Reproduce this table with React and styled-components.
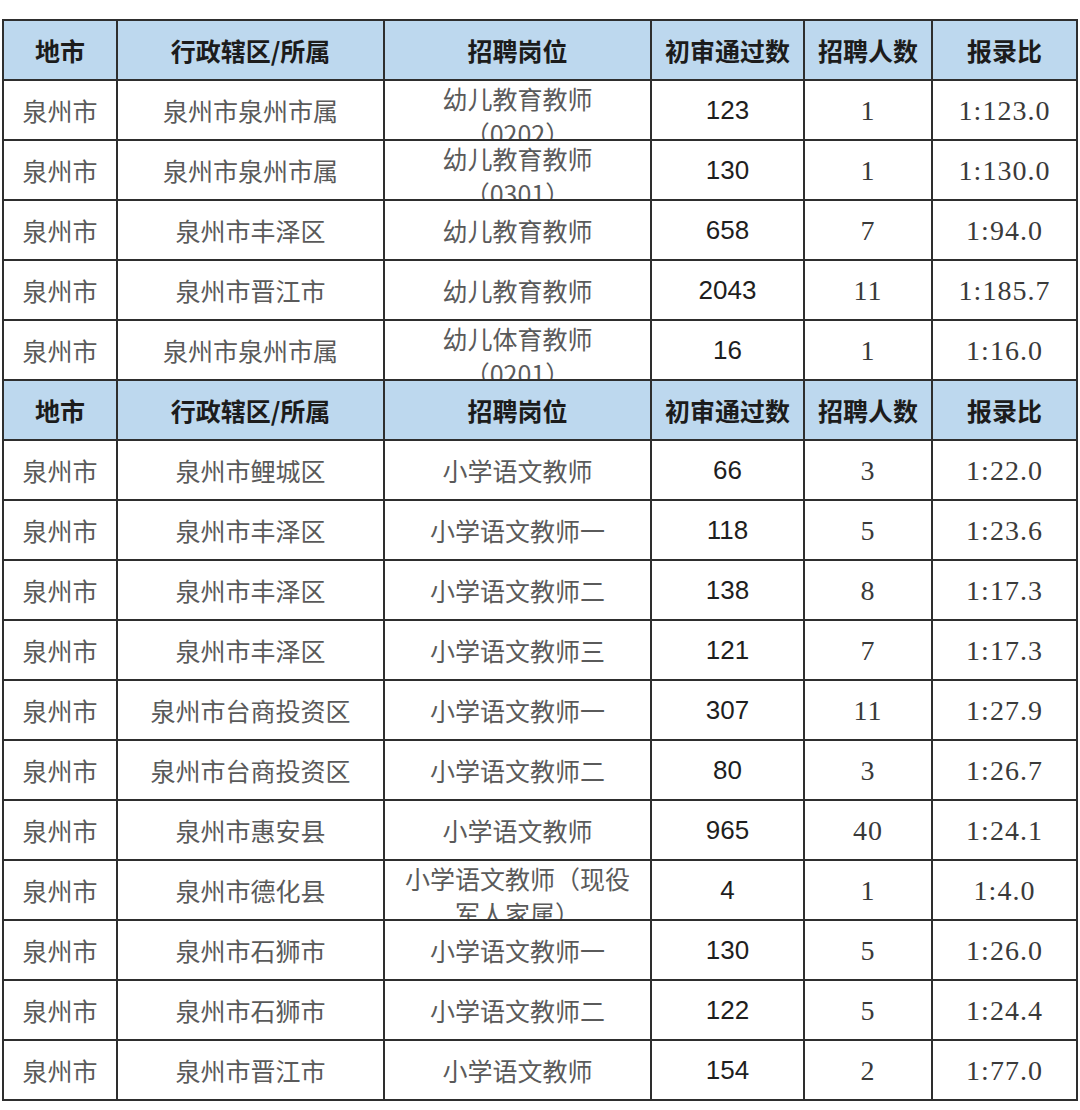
import styled, { createGlobalStyle } from "styled-components";

const GlobalStyle = createGlobalStyle`
	html, body {
		margin: 0;
		padding: 0;
		background: #ffffff;
	}
	body {
		padding: 19px 2px 0 2px;
		font-family: "Noto Sans CJK SC", "Noto Sans", sans-serif;
	}
`;

const HEAD = ["地市", "行政辖区/所属", "招聘岗位", "初审通过数", "招聘人数", "报录比"];

// first block: kindergarten posts
const GROUP_1 = [
	["泉州市", "泉州市泉州市属", "幼儿教育教师\n（0202）", "123", "1", "1:123.0"],
	["泉州市", "泉州市泉州市属", "幼儿教育教师\n（0301）", "130", "1", "1:130.0"],
	["泉州市", "泉州市丰泽区", "幼儿教育教师", "658", "7", "1:94.0"],
	["泉州市", "泉州市晋江市", "幼儿教育教师", "2043", "11", "1:185.7"],
	["泉州市", "泉州市泉州市属", "幼儿体育教师\n（0201）", "16", "1", "1:16.0"],
];

// second block: primary school chinese
const GROUP_2 = [
	["泉州市", "泉州市鲤城区", "小学语文教师", "66", "3", "1:22.0"],
	["泉州市", "泉州市丰泽区", "小学语文教师一", "118", "5", "1:23.6"],
	["泉州市", "泉州市丰泽区", "小学语文教师二", "138", "8", "1:17.3"],
	["泉州市", "泉州市丰泽区", "小学语文教师三", "121", "7", "1:17.3"],
	["泉州市", "泉州市台商投资区", "小学语文教师一", "307", "11", "1:27.9"],
	["泉州市", "泉州市台商投资区", "小学语文教师二", "80", "3", "1:26.7"],
	["泉州市", "泉州市惠安县", "小学语文教师", "965", "40", "1:24.1"],
	["泉州市", "泉州市德化县", "小学语文教师（现役\n军人家属）", "4", "1", "1:4.0"],
	["泉州市", "泉州市石狮市", "小学语文教师一", "130", "5", "1:26.0"],
	["泉州市", "泉州市石狮市", "小学语文教师二", "122", "5", "1:24.4"],
	["泉州市", "泉州市晋江市", "小学语文教师", "154", "2", "1:77.0"],
];

const KINDS = ["cjk", "cjk", "cjk", "num", "serif", "serif"];

const App = () => {
	const renderHead = (key) =>
		HEAD.map((h, i) => (
			<HeadCell key={`${key}-${i}`}>{h}</HeadCell>
		));

	const renderRows = (rows, key) =>
		rows.map((row, r) =>
			row.map((val, c) => {
				const multi = val.includes("\n");
				return (
					<Cell key={`${key}-${r}-${c}`} $kind={KINDS[c]} $multi={multi}>
						<CellText>{val}</CellText>
					</Cell>
				);
			})
		);

	return (
		<>
			<GlobalStyle />
			<Table>
				{renderHead("h1")}
				{renderRows(GROUP_1, "g1")}
				{renderHead("h2")}
				{renderRows(GROUP_2, "g2")}
			</Table>
		</>
	);
};

const Table = styled.div`
	width: 1076px;
	box-sizing: border-box;
	display: grid;
	grid-template-columns: 112px 265px 265px 151px 126px 143px;
	grid-auto-rows: 58px;
	gap: 2px;
	padding: 2px;
	background: #2e2e2e;
`;

const HeadCell = styled.div`
	background: #bdd8ee;
	display: flex;
	align-items: center;
	justify-content: center;
	font-family: "Noto Sans CJK SC", sans-serif;
	font-weight: 700;
	font-size: 25px;
	color: #1c1c1c;
	white-space: nowrap;
`;

const fontFor = (kind) => {
	if (kind === "num") return `"Liberation Sans", Arial, sans-serif`;
	if (kind === "serif") return `"Liberation Serif", "Times New Roman", serif`;
	return `"Noto Sans CJK SC", sans-serif`;
};

const Cell = styled.div`
	background: #ffffff;
	overflow: hidden;
	display: flex;
	justify-content: center;
	align-items: ${(p) => (p.$multi ? "flex-start" : "center")};
	box-sizing: border-box;
	text-align: center;
	white-space: pre-line;
	line-height: ${(p) => (p.$multi ? "35px" : "31px")};
	font-family: ${(p) => fontFor(p.$kind)};
	font-size: ${(p) => (p.$kind === "cjk" ? "25px" : p.$kind === "num" ? "26px" : "28px")};
	letter-spacing: ${(p) => (p.$kind === "serif" ? "1px" : "0")};
	font-weight: 400;
	color: ${(p) => (p.$kind === "num" ? "#1e1e1e" : p.$kind === "serif" ? "#3a3a3a" : "#5a5a5a")};
`;

const CellText = styled.span`
	display: block;
`;

export default App;
